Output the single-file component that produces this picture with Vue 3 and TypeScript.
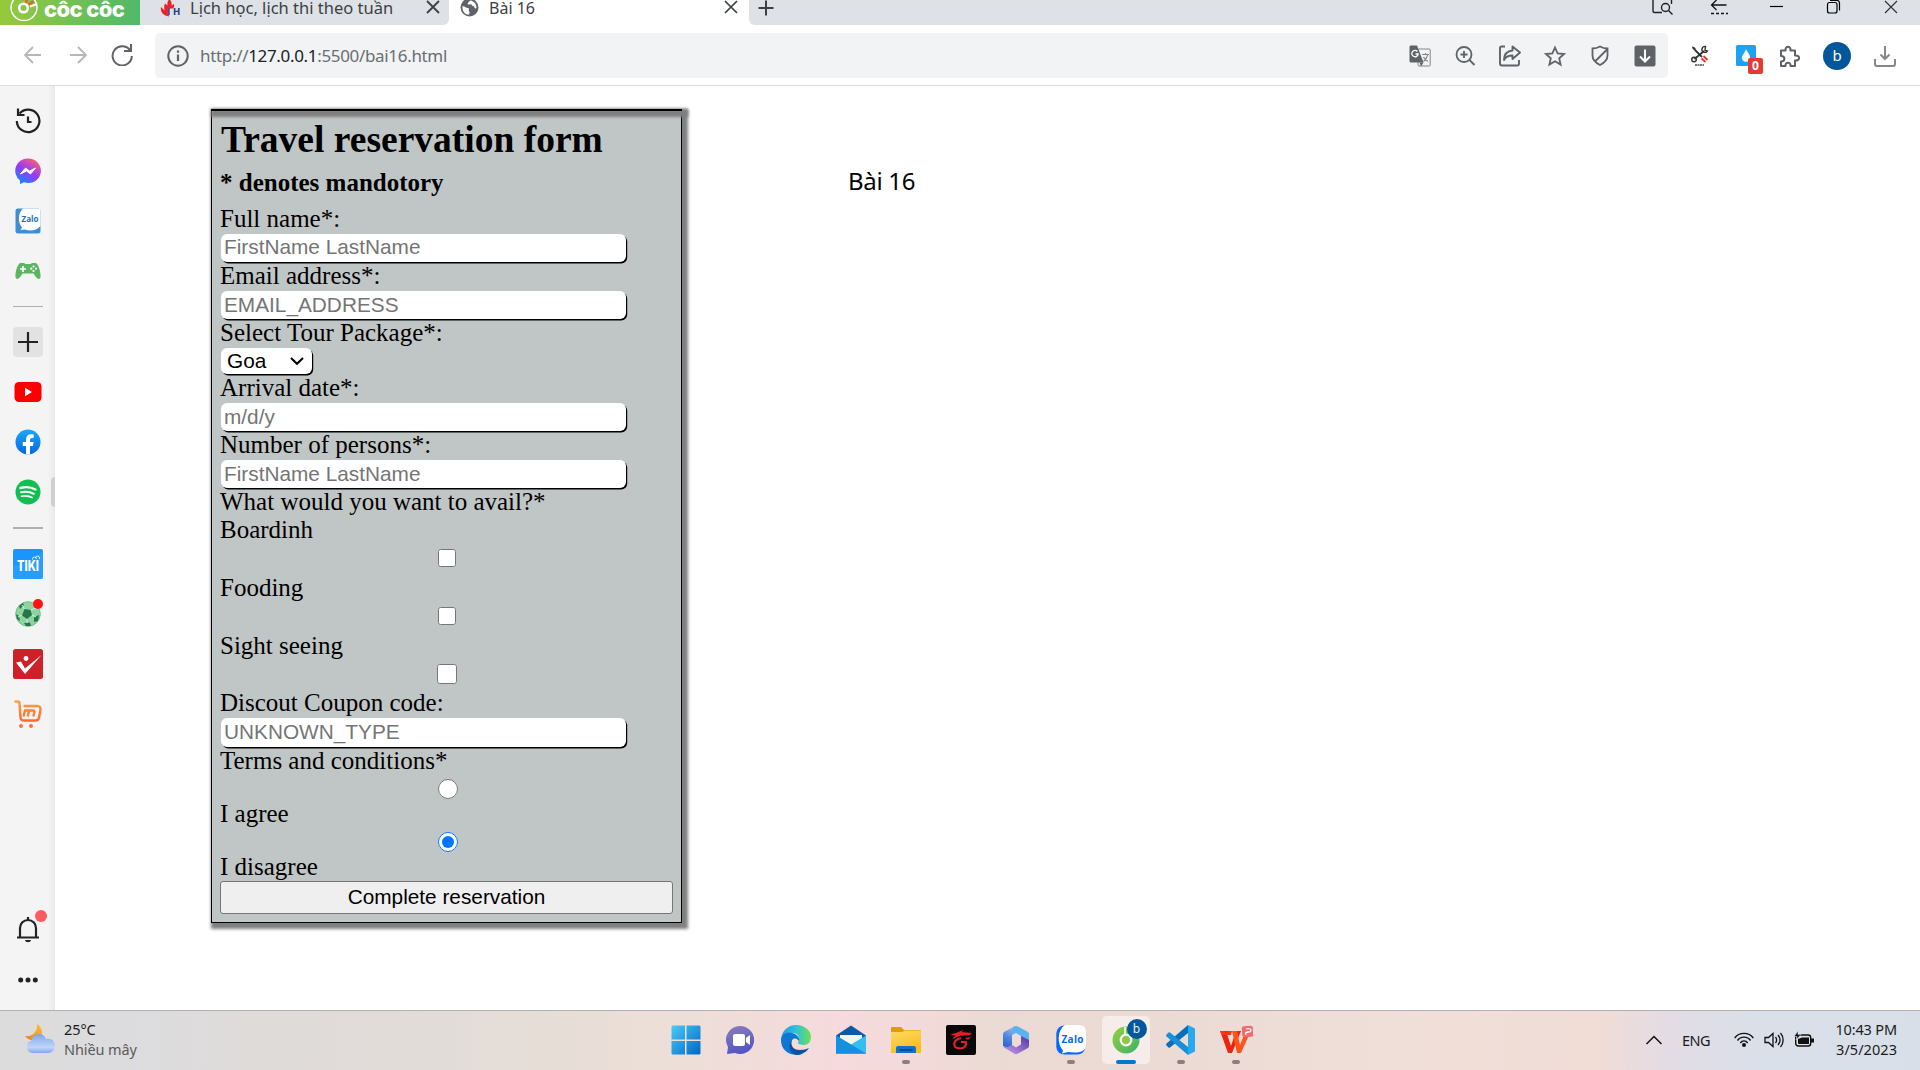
<script setup lang="ts">
interface Field {
  label: string
  placeholder: string
}

const contactFields: Field[] = [
  { label: 'Full name*:', placeholder: 'FirstName LastName' },
  { label: 'Email address*:', placeholder: 'EMAIL_ADDRESS' },
]
const tripFields: Field[] = [
  { label: 'Arrival date*:', placeholder: 'm/d/y' },
  { label: 'Number of persons*:', placeholder: 'FirstName LastName' },
]
const services: string[] = ['Boardinh', 'Fooding', 'Sight seeing']
</script>

<template>
  <div class="screen">
    <!-- Tab strip -->
    <header class="tabs">
      <div class="brand">
        <svg width="30" height="25" viewBox="0 0 30 25" fill="none">
          <circle cx="14" cy="7.500" r="13" stroke="#fff" stroke-width="1.400" />
          <circle cx="13.500" cy="8" r="4.300" stroke="#fff" stroke-width="2.600" />
          <path d="M16 3l1-4M18.500 4.500l5-3" stroke="#f0592b" stroke-width="2.200" />
          <path d="M20 6.500l6-2" stroke="#fff" stroke-width="2" />
        </svg>
        <span>cốc cốc</span>
      </div>
      <div class="tab tab-idle">
        <svg class="fav" width="20" height="20" viewBox="0 0 20 20">
          <path d="M9 18.500C3 18 0 13 1 9l3.500 3.500C4 9 4 7.500 5 5.500l2.500 2C7 4.500 8 2.500 9.500 1c1.800 2 2.500 4 2 6.500L14 6c.5 2 0 3.500-.8 4.500H8.500v4z" fill="#ec2227" />
          <text x="7.500" y="17" font-family="Inter, sans-serif" font-weight="800" font-size="9" fill="#2f3f91" textLength="12.500">IH</text>
        </svg>
        <span class="tab-title t1">Lịch học, lịch thi theo tuần</span>
        <svg class="close" width="14" height="14" viewBox="0 0 14 14"><path d="M1 1l12 12M13 1L1 13" stroke="#3c4043" stroke-width="1.800" /></svg>
      </div>
      <div class="tab tab-active">
        <svg class="fav" width="19" height="19" viewBox="0 0 19 19">
          <circle cx="9.500" cy="9.500" r="9" fill="#5f6368" />
          <path d="M2.500 8c3 .5 3 2 6 2 1 1.500-.5 2.500 1 4 .5 1-.5 1.800-1 2.800C5 16.500 2 13.500 2.500 8zM10 2.500c-1 2-3 2-2 4 2 .5 2-1 3.500 0 .5 2 3 1 3 3 .2 1.500 1.500 1 2 .5.3-3.500-2-7-6.500-7.500z" fill="#fff" />
        </svg>
        <span class="tab-title t2">Bài 16</span>
        <svg class="close" width="14" height="14" viewBox="0 0 14 14"><path d="M1 1l12 12M13 1L1 13" stroke="#3c4043" stroke-width="1.700" /></svg>
      </div>
      <div class="strip">
        <svg class="newtab" width="16" height="16" viewBox="0 0 16 16"><path d="M8 .5v15M.5 8h15" stroke="#3c4043" stroke-width="2" /></svg>
        <div class="win">
          <svg width="57" height="25" viewBox="0 0 57 25" fill="none" stroke="#222" stroke-width="1.400">
            <path d="M19 0v11q0 1.500 1.500 1.500H28M37.500 0v4" /><circle cx="31.500" cy="7.500" r="4" /><path d="M34.500 10.500l4 4" />
          </svg>
          <svg width="57" height="25" viewBox="0 0 57 25" fill="none" stroke="#111" stroke-width="1.300">
            <path d="M35.500 5H20.500M25.500 0l-5 5 5 5" /><path d="M20 13.500h17" stroke-dasharray="3 2" />
          </svg>
          <svg width="57" height="25" viewBox="0 0 57 25"><path d="M22 6.500h13" stroke="#000" stroke-width="1.200" /></svg>
          <svg width="57" height="25" viewBox="0 0 57 25" fill="none" stroke="#000" stroke-width="1.200">
            <rect x="22.500" y="2.500" width="9.500" height="10.500" rx="2" /><path d="M25 .5h7q2.500 0 2.500 2.500v7.500" />
          </svg>
          <svg width="57" height="25" viewBox="0 0 57 25"><path d="M23 1l12 12M35 1L23 13" stroke="#333" stroke-width="1.200" /></svg>
        </div>
      </div>
    </header>

    <!-- Address bar -->
    <nav class="toolbar">
      <div class="nav">
        <svg width="20" height="20" viewBox="0 0 20 20" fill="none" stroke="#b4b6b8" stroke-width="1.800"><path d="M18 10H2.500M10 2l-8 8 8 8" /></svg>
        <svg width="20" height="20" viewBox="0 0 20 20" fill="none" stroke="#b4b6b8" stroke-width="1.800"><path d="M2 10h15.500M10 2l8 8-8 8" /></svg>
        <svg width="22" height="22" viewBox="0 0 22 22" fill="none" stroke="#5f6368" stroke-width="2"><path d="M19.500 7A9.600 9.600 0 1 0 20.800 12" /><path d="M20 0v7h-7" /></svg>
      </div>
      <div class="url">
        <svg width="22" height="22" viewBox="0 0 22 22" fill="none" stroke="#5f6368" stroke-width="2"><circle cx="11" cy="11" r="9.700" /><path d="M11 9.500V16M11 5.500v2.300" stroke-width="2.200" /></svg>
        <span class="address">http://<b>127.0.0.1</b>:5500/bai16.html</span>
        <div class="url-icons">
          <svg width="22" height="22" viewBox="0 0 22 22">
            <rect x="9" y="4" width="12.200" height="17" rx="1" fill="#f1f3f4" stroke="#85888b" />
            <path d="M1.500.5H8l6.500 17H2q-1.500 0-1.500-1.500V2Q.5.5 1.500.5z" fill="#5f6368" /><path d="M10.500 17.500h4l-2.500 4z" fill="#5f6368" />
            <path d="M8.500 6.500a3.200 3.200 0 1 0 .7 2.500H6.500" fill="none" stroke="#fff" stroke-width="1.300" />
            <path d="M13 9.500h7M16.500 8v1.500M18.500 10c-.5 3-2 5-4 6.500M14.500 12c1 2 2.500 3.500 4.500 4.500" fill="none" stroke="#85888b" stroke-width="1.200" />
          </svg>
          <svg width="22" height="22" viewBox="0 0 22 22" fill="none" stroke="#5f6368" stroke-width="1.800"><circle cx="10" cy="9.500" r="7.500" /><path d="M15.500 15l5 5M10 6v7M6.500 9.500h7" /></svg>
          <svg width="22" height="22" viewBox="0 0 22 22" fill="none" stroke="#5f6368" stroke-width="1.900" stroke-linejoin="round"><path d="M6 1.500H2.500q-1.500 0-1.500 1.500v15.500Q1 20.500 3 20.500h15.500q1.500 0 1.500-1.500V15" /><path d="M13.500 1.500l7.500 6-7.500 6.500V10.500C9 10.500 6.500 12 5 15c.2-6 3-9 8.500-9.500z" /></svg>
          <svg width="22" height="22" viewBox="0 0 22 22" fill="none" stroke="#5f6368" stroke-width="1.800"><path d="M11 2.500l2.600 5.900 6.400.6-4.800 4.300 1.400 6.300L11 16.300l-5.600 3.300 1.400-6.300L2 9l6.400-.6z" /></svg>
          <svg width="22" height="22" viewBox="0 0 22 22" fill="none" stroke="#5f6368" stroke-width="1.800"><path d="M11 1.500c2.500 1.500 5 2 7.500 2v7c0 4.500-3.500 7.500-7.500 9.500-4-2-7.500-5-7.500-9.500v-7c2.500 0 5-.5 7.500-2zM18 4.500L6 16.500" /></svg>
          <svg width="22" height="22" viewBox="0 0 22 22"><rect x=".5" y=".5" width="21" height="21" rx="2" fill="#5f6368" /><path d="M11 4.500v12M6 11.500l5 5 5-5" fill="none" stroke="#fff" stroke-width="2" /></svg>
        </div>
      </div>
      <div class="extensions">
        <svg width="20" height="22" viewBox="0 0 20 22" fill="none">
          <path d="M4.500 14L14 6M5 5l7 7" stroke="#333" stroke-width="1.800" /><path d="M2 1.500c2 0 4 1.500 4 4-2 0-4-1.500-4-4z" fill="#333" />
          <path d="M15.500 1.500a3 3 0 1 0 2 4.500l-2.500-.5z" stroke="#333" stroke-width="1.400" /><circle cx="4" cy="14.500" r="2.300" stroke="#333" stroke-width="1.400" />
          <path d="M11.500 13.500l4 3.500M13.500 11l4 4" stroke="#e33" stroke-width="1.800" /><path d="M5 20h9" stroke="#777" stroke-width="2" stroke-dasharray="2 .5" />
        </svg>
        <div class="drop">
          <svg width="20" height="21" viewBox="0 0 20 21"><rect width="20" height="21" rx="1.500" fill="#1da1f2" /><path d="M10 4c1 3 4 5 4 8.500a4 4.200 0 0 1-8 0C6 9.500 9 8 10 4z" fill="#fff" /></svg>
          <span>0</span>
        </div>
        <svg width="22" height="22" viewBox="0 0 22 22" fill="none" stroke="#5f6368" stroke-width="2" stroke-linejoin="round"><path d="M2 5.500h4.500c-.6-5 5.600-5 5 0H16v5c5.500-.5 5.500 5.500 0 5V21h-4.500c.5-4.500-5.500-4.500-5 0H2v-4.500c4.500 0 4.500-5.500 0-5.500z" /></svg>
        <span class="avatar">b</span>
        <svg width="22" height="22" viewBox="0 0 22 22" fill="none" stroke="#85888b" stroke-width="2"><path d="M1 14v5q0 2 2 2h16q2 0 2-2v-5M11 1v13M6.500 9.500L11 14l4.500-4.500" /></svg>
      </div>
    </nav>

    <main class="body">
      <!-- Side panel -->
      <aside class="side">
        <div class="item"><svg width="26" height="26" viewBox="0 0 26 26" fill="none" stroke="#222" stroke-width="2.200"><path d="M4.500 5.500A11.300 11.300 0 1 1 1.800 13" /><path d="M3 .5V7h6.500M13 8.500V14h3.500" /></svg></div>
        <div class="item">
          <svg width="26" height="26" viewBox="0 0 26 26">
            <defs><linearGradient id="msg" x1=".2" y1="1" x2=".8" y2="0"><stop offset="0" stop-color="#0a8dff" /><stop offset=".5" stop-color="#9b39f5" /><stop offset="1" stop-color="#ff6470" /></linearGradient></defs>
            <path d="M13 .5a12.500 12.300 0 1 1-4 23.800L5 26v-3.500A12.300 12.300 0 0 1 13 .5z" fill="url(#msg)" /><path d="M5.500 16l5-6 4 3 6-3-5 6-4-3z" fill="#fff" stroke="#fff" stroke-width="1" />
          </svg>
        </div>
        <div class="item">
          <svg width="26" height="26" viewBox="0 0 26 26">
            <rect x=".5" y=".5" width="25" height="25" rx="2.500" fill="#3b8fd9" /><path d="M8 .5h15.500q2 0 2 2V18c-4 5-11 5.500-15.500 3.500L5.500 22l1.500-2.500C2.500 14 3 5 8 .5z" fill="#fff" />
            <text x="6.500" y="14" font-family="Open Sans, sans-serif" font-weight="700" font-size="8" fill="#1672c4" textLength="17">Zalo</text>
          </svg>
        </div>
        <div class="item">
          <svg width="26" height="18" viewBox="0 0 26 18">
            <path d="M5 1h4l1.500 1h5L17 1h4c3 2 5 10 4.500 14-1 3.500-4 2-7-3.500h-11C4.500 17 1.500 18.500.5 15 0 11 2 3 5 1z" fill="#5cb562" />
            <path d="M8 4v6M5 7h6" stroke="#fff" stroke-width="1.700" /><circle cx="18.500" cy="4.500" r="1.100" fill="#fff" /><circle cx="18.500" cy="9" r="1.100" fill="#fff" /><circle cx="16.300" cy="6.700" r="1.100" fill="#fff" /><circle cx="21" cy="6.700" r="1.100" fill="#fff" />
          </svg>
        </div>
        <div class="rule"></div>
        <div class="item"><div class="add"><svg width="20" height="20" viewBox="0 0 20 20"><path d="M10 0v20M0 10h20" stroke="#222" stroke-width="2.200" /></svg></div></div>
        <div class="item"><svg width="28" height="20" viewBox="0 0 28 20"><rect x=".5" width="27" height="20" rx="4.500" fill="#f00" /><path d="M11 5.800v8.400l7-4.200z" fill="#fff" /></svg></div>
        <div class="item"><svg width="26" height="26" viewBox="0 0 26 26"><defs><linearGradient id="fb" x2="0" y2="1"><stop stop-color="#1aa9fb" /><stop offset="1" stop-color="#0765e2" /></linearGradient></defs><circle cx="13" cy="13" r="12.500" fill="url(#fb)" /><path d="M11 25.500V17H7.800v-4H11v-2.500C11 7 13 5.300 16 5.300l2.700.3V9H17c-1.500 0-2 .8-2 1.900V13h3.600l-.7 4H15v8.500z" fill="#fff" /></svg></div>
        <div class="item"><svg width="26" height="26" viewBox="0 0 26 26" fill="none" stroke="#fff" stroke-linecap="round"><circle cx="13" cy="13" r="12.500" fill="#11bf50" stroke="none" /><path d="M5.500 9c5-1.500 10.500-1 15 1.500" stroke-width="2.400" /><path d="M6 13.300c4.500-1.200 9-.7 12.800 1.500" stroke-width="2" /><path d="M6.500 17.300c4-1 7.500-.5 10.500 1.300" stroke-width="1.700" /></svg></div>
        <div class="rule thick"></div>
        <div class="item"><svg width="30" height="30" viewBox="0 0 30 30"><rect width="30" height="30" rx="2" fill="#1a94ff" /><path d="M0 16c10 0 20-4 30-14v26q0 2-2 2H2q-2 0-2-2z" fill="#35a4ff" opacity=".55" /><path d="M19.500 10.500V10a2 2 0 0 1 4 0M22.500 9a2 2 0 0 1 4 0v1" fill="none" stroke="#fff" stroke-width="1" opacity=".8" /><text x="4" y="21.500" font-family="Inter, sans-serif" font-weight="800" font-size="14" fill="#fff" textLength="22" lengthAdjust="spacingAndGlyphs">TIKI</text></svg></div>
        <div class="item">
          <svg width="26" height="26" viewBox="0 0 26 26"><circle cx="13" cy="13" r="12.300" fill="#8ed3a1" stroke="#6cc387" /><g fill="#267747"><path d="M9.500 8l6 1 1.500 5-5 4-5-3.500z" /><path d="M4 5l4-3 1 2-4 4zM1 13l3 2 1 5-3-2zM19 16l5-2-1 6-4 1zM9 22l6-.5 1 3.500H11z" /></g><path d="M16 9l5-2M17 14l4 2M12 18v4M7 14l-4 2M9.500 8L7 4" stroke="#d6f0dc" /></svg>
          <i class="dot ball"></i>
        </div>
        <div class="item"><svg width="30" height="30" viewBox="0 0 30 30"><rect width="30" height="30" rx="2.500" fill="#cd2028" /><path d="M3 13.500l5-1 4 7L28.500 6 12 25z" fill="#fff" /><circle cx="13" cy="9.500" r="2.400" fill="#fff" /></svg></div>
        <div class="item"><svg width="28" height="28" viewBox="0 0 28 28" fill="none"><defs><linearGradient id="cart" x2="0" y2="1"><stop stop-color="#ff9f43" /><stop offset="1" stop-color="#ff6a30" /></linearGradient></defs><path d="M.5 1.500h3q2 0 2 2l1 14q.3 3 3 3h12q3 0 3.500-3L26.500 10q.4-4-3-4H9.500" stroke="url(#cart)" stroke-width="2.500" /><path d="M9.500 16.500l1.500-6h8q1.800 0 1.400 1.700l-1 4.300M15 10.500l-1.200 6" stroke="#ff8138" stroke-width="2.400" /><circle cx="7" cy="26" r="2" fill="#ff6f3b" /><circle cx="17" cy="26" r="2" fill="#ff6f3b" /></svg></div>
        <div class="grow"></div>
        <div class="item">
          <svg width="24" height="26" viewBox="0 0 24 26"><path d="M1 20.500h22M4 20V11a8 8 0 0 1 16 0v9M12 3V0" fill="none" stroke="#222" stroke-width="2.200" /><path d="M9 23h6c-.5 3-5.500 3-6 0z" fill="#222" /></svg>
          <i class="dot bell"></i>
        </div>
        <div class="item"><svg width="20" height="6" viewBox="0 0 20 6" fill="#222"><circle cx="2.700" cy="3" r="2.500" /><circle cx="10" cy="3" r="2.500" /><circle cx="17.300" cy="3" r="2.500" /></svg></div>
        <div class="handle"></div>
      </aside>

      <!-- Web page -->
      <form class="form" @submit.prevent>
        <div class="lid"></div>
        <h1>Travel reservation form</h1>
        <h2>* denotes mandotory</h2>
        <template v-for="f in contactFields" :key="f.label">
          <label>{{ f.label }}</label>
          <input class="text" type="text" :placeholder="f.placeholder" />
        </template>
        <label>Select Tour Package*:</label>
        <div class="select">
          <span>Goa</span>
          <svg width="14" height="9" viewBox="0 0 14 9"><path d="M1 1l6 5.800L13 1" fill="none" stroke="#000" stroke-width="2" /></svg>
        </div>
        <template v-for="f in tripFields" :key="f.label">
          <label>{{ f.label }}</label>
          <input class="text" type="text" :placeholder="f.placeholder" />
        </template>
        <label>What would you want to avail?*</label>
        <template v-for="(s, i) in services" :key="s">
          <label>{{ s }}</label>
          <div class="check" :class="{ last: i === services.length - 1 }"><input type="checkbox" /></div>
        </template>
        <label>Discout Coupon code:</label>
        <input class="text tall" type="text" placeholder="UNKNOWN_TYPE" />
        <label>Terms and conditions*</label>
        <div class="radio"><input type="radio" name="terms" /></div>
        <label>I agree</label>
        <div class="radio"><input type="radio" name="terms" checked /></div>
        <label>I disagree</label>
        <button type="button">Complete reservation</button>
      </form>
      <p class="caption">Bài 16</p>
    </main>

    <!-- Taskbar -->
    <footer class="taskbar">
      <div class="weather">
        <svg width="30" height="30" viewBox="0 0 30 30">
          <defs><linearGradient id="cl" x2="0" y2="1"><stop stop-color="#7aa5ea" /><stop offset=".7" stop-color="#c3d6f8" /><stop offset="1" stop-color="#7fa6ee" /></linearGradient><linearGradient id="mn" x1="1" x2="0" y2="1"><stop stop-color="#fbc531" /><stop offset="1" stop-color="#ee7d1c" /></linearGradient></defs>
          <path d="M12 0c7 4 7 14-1 16-5 1-9-1-11-4C7 13 13 8 12 0z" fill="url(#mn)" />
          <path d="M7 29a6.500 6.500 0 0 1-.5-12.500C8 8 19 8 21 15c5-1.500 9 2 9 6.500S27 29 23 29z" fill="url(#cl)" />
        </svg>
        <div class="wtext"><span>25°C</span><span class="cond">Nhiều mây</span></div>
      </div>
      <div class="apps">
        <div class="app"><svg width="30" height="30" viewBox="0 0 30 30"><defs><linearGradient id="win" x2="1" y2="1"><stop stop-color="#4cc9fa" /><stop offset="1" stop-color="#0067c4" /></linearGradient></defs><path d="M1.500.5H14v14H.5v-13zM15.500.5h13l1 1v13h-14zM.5 16H14v13.500H1.500l-1-1zM15.500 16h14v12.500l-1 1h-13z" fill="url(#win)" /></svg></div>
        <div class="app"><svg width="30" height="30" viewBox="0 0 30 30"><defs><linearGradient id="ch" x1=".2" x2=".5" y2="1"><stop stop-color="#8b7ab8" /><stop offset="1" stop-color="#5056c8" /></linearGradient></defs><path d="M15 1a14 14 0 1 1-6 27L1 29l1-7A14 14 0 0 1 15 1z" fill="url(#ch)" /><rect x="7" y="9" width="12" height="12" rx="2" fill="#fff" /><path d="M20 13l4-3v10l-4-3z" fill="#fff" /></svg></div>
        <div class="app"><svg width="32" height="32" viewBox="0 0 32 32"><defs><linearGradient id="e1" x2="1"><stop stop-color="#2396e5" /><stop offset=".5" stop-color="#2fc1db" /><stop offset="1" stop-color="#6be34c" /></linearGradient></defs><path d="M1 17C1 7 8 1 16 1c9 0 15 6 15 12 0 5-3 8-7 8-3 0-6-1-6-2 0-1 1-1 1-4 0-4-3-6-6-6-6 0-10 3-12 8z" fill="url(#e1)" /><path d="M1 16C2 9 8 8 12 9c5 1 8 5 7 8l-1-1c-3-3-7-1-7 4 0 6 6 11 12 10C12 33 1 28 1 16z" fill="#0c78d2" /><path d="M12 16c-2 5 1 10 8 10 4 0 6-1 9-2-4 6-10 7-13 7-6-2-9-10-4-15z" fill="#0e4f9f" /></svg></div>
        <div class="app"><svg width="32" height="30" viewBox="0 0 32 30"><path d="M16 .5l15 10v18H1v-18z" fill="#0c59a4" /><path d="M5 10h22v10H5z" fill="#f3f3f3" /><path d="M1 10.500l15 9 15-9v17q0 1-1 1H2q-1 0-1-1z" fill="#35bdf0" /><path d="M1 10.500l30 18H2q-1 0-1-1z" fill="#1490df" /></svg></div>
        <div class="app"><svg width="32" height="28" viewBox="0 0 32 28"><defs><linearGradient id="fo" x2=".4" y2="1"><stop stop-color="#ffd968" /><stop offset="1" stop-color="#f9bd1c" /></linearGradient></defs><path d="M1 6V2q0-1 1-1h9l3 3h16q1 0 1 1v5H1z" fill="#dd9c09" /><path d="M1 6h11l3-1.500h16V26q0 1-1 1H1z" fill="url(#fo)" /><path d="M6 27v-5q0-2 2-2h16q2 0 2 2v5z" fill="#1172cd" /><path d="M9.500 24h13" stroke="#073f7c" stroke-width="1.400" /></svg><i class="run"></i></div>
        <div class="app"><svg width="30" height="30" viewBox="0 0 30 30"><rect width="30" height="30" rx="2" fill="#080808" /><path d="M10 8l7-3-1.500 2L26 8c-1 1.500-3 2.500-5 2.500-7 0-10 .5-14 4 0-2 1-3 2.500-4L4.500 10C6 8.500 8 8.500 10 8z" fill="#df202d" /><path d="M15 13c-5 1-7.500 4-6.500 7.500 1 3.500 8 4 10.500 1 1.200-1.500 1.200-3 .8-4.500h-5" fill="none" stroke="#df202d" stroke-width="2.200" /><path d="M19 13l6-1-3 3z" fill="#df202d" /></svg></div>
        <div class="app"><svg width="28" height="30" viewBox="0 0 28 30">
          <defs><linearGradient id="m1" x1=".5" x2=".2" y2="1"><stop stop-color="#a7b0f2" /><stop offset=".5" stop-color="#4d86dc" /><stop offset="1" stop-color="#2f5fc6" /></linearGradient><linearGradient id="m2" x1="1" x2="0" y2="1"><stop stop-color="#4a37a2" /><stop offset="1" stop-color="#d09cf0" /></linearGradient></defs>
          <path d="M14 1L10 5v15l-4 3-5-2V9q0-1 1-2L12 1.500z" fill="url(#m1)" />
          <path d="M12 1.500q2-1 4 0L26 7q1 1 1 2v8l-8-6-5-3-4 2V5q0-2 2-3.500z" fill="#58b4ee" />
          <path d="M27 15v6q0 1-1 2l-10 5.500q-2 1-4 0L1 22l5 0 4-2 4 2.500 5-3V11l6 3z" fill="url(#m2)" />
          <path d="M10 11.500l4-3 5 3v7l-5 3-4-3z" fill="#ecdbd6" />
        </svg></div>
        <div class="app"><svg width="30" height="30" viewBox="0 0 30 30"><rect x=".3" y=".5" width="29" height="29" rx="8" fill="#0868f7" /><path d="M9 0h14q7 0 7 7v14c-1 7-10 7-18 6l-6 1.500 1-3C1 19 1 5 9 0z" fill="#fff" /><text x="5.500" y="17.500" font-family="Open Sans, sans-serif" font-weight="700" font-size="10" fill="#0868f7" textLength="22">Zalo</text></svg><i class="run"></i></div>
        <div class="app current"><div class="tile"><svg width="28" height="28" viewBox="0 0 28 28"><defs><linearGradient id="cc" x2="1" y2="1"><stop stop-color="#97cf3e" /><stop offset="1" stop-color="#39b36b" /></linearGradient></defs><circle cx="14" cy="14" r="13.500" fill="url(#cc)" /><circle cx="14" cy="14" r="5.300" fill="#8bca45" stroke="#fff" stroke-width="2.200" /><path d="M13 9V1" stroke="#fff" stroke-width="1.600" /></svg><span class="badge">b</span></div><i class="run wide"></i></div>
        <div class="app"><svg width="30" height="30" viewBox="0 0 30 30"><path d="M22 0l7 3.500v23L22 30z" fill="#28a8ef" /><path d="M22 0v8L4 22.500q-.8.500-1.500 0L.5 20.500q-.8-1 0-2z" fill="#0870b8" /><path d="M22 30v-8L4 7.500q-.8-.5-1.500 0L.5 9.500q-.8 1 0 2z" fill="#1690d8" /></svg><i class="run"></i></div>
        <div class="app"><svg width="34" height="32" viewBox="0 0 34 32"><path d="M1 7h6l5 15 5-15h5l-9 22H9z" fill="#e8270f" /><path d="M13 7h5l3 14 4-10h5l-8 18h-4z" fill="#ff5319" /><path d="M1 7h12l-1 4H3z" fill="#ff2f18" /><rect x="23" y="2" width="11" height="11" rx="2" transform="rotate(-4 28 7)" fill="#f06b70" /><path d="M27 11c-1-2 0-3 2-3s3-1 3-2-2-2-5-1" stroke="#fff" stroke-width="1.300" fill="none" /></svg><i class="run"></i></div>
      </div>
      <div class="tray">
        <svg class="chev" width="16" height="10" viewBox="0 0 16 10"><path d="M.5 9L8 1.500 15.500 9" fill="none" stroke="#111" stroke-width="1.500" /></svg>
        <span class="lang">ENG</span>
        <svg class="wifi" width="20" height="16" viewBox="0 0 20 16" fill="none" stroke="#111" stroke-width="1.400"><path d="M.7 6C5-.2 15-.2 19.300 6M3.500 8.500c3-4.500 10-4.500 13 0M6.300 11c2-2.800 5.400-2.800 7.400 0" /><circle cx="10" cy="13" r="2" fill="#111" stroke="none" /></svg>
        <svg class="vol" width="20" height="18" viewBox="0 0 20 18" fill="none" stroke="#111" stroke-width="1.300"><path d="M1 6.500h3.500L9 2.500v13L4.500 11.500H1zM11.500 6c1.500 2 1.500 4 0 6M14 4c2.500 3 2.500 7 0 10M16.500 2c3.500 4 3.500 10 0 14" /></svg>
        <svg class="bat" width="20" height="18" viewBox="0 0 20 18"><rect x="1.700" y="4" width="15" height="11" rx="2.500" fill="none" stroke="#111" stroke-width="1.400" /><path d="M4 12.500V8l4-1.500h7V13H5z" fill="#111" /><path d="M17 7.500h3v4h-3z" fill="#111" /><path d="M4 0L0 5.500h3L2 9l5-5.500H4z" fill="#111" stroke="#dbe0e9" stroke-width=".6" /></svg>
        <div class="clock"><span>10:43 PM</span><span class="date">3/5/2023</span></div>
      </div>
    </footer>
  </div>
</template>

<style>
body { margin: 0; overflow: hidden; }
</style>

<style scoped>
* { box-sizing: border-box; }
svg { display: block; flex: none; }
.screen { width: 1920px; height: 1070px; display: flex; flex-direction: column; background: #fff; overflow: hidden; font-family: "Noto Sans", "Open Sans", sans-serif; }

.tabs { height: 25px; flex: none; display: flex; background: linear-gradient(90deg, #dee1e6 300px, #fff 300px, #fff 900px, #dee1e6 900px); overflow: hidden; }
.brand { width: 140px; display: flex; padding-left: 10px; background: linear-gradient(90deg, #97c93d, #4fb96a); color: #fff; }
.brand span { font: 800 22px/24px Inter, sans-serif; margin: -3px 0 0 4px; letter-spacing: -0.6px; white-space: nowrap; }
.tab { display: flex; align-items: flex-start; }
.tab-idle { width: 309px; background: #dee1e6; border-radius: 0 0 6px 0; padding-left: 20px; }
.tab-active { width: 300px; background: #fff; padding-left: 11px; }
.fav { margin-top: -2px; }
.tab-title { color: #3c4043; font-size: 16px; line-height: 24px; margin-top: -4px; white-space: nowrap; }
.t1 { margin-left: 10px; width: 236px; font-size: 16.5px; }
.t2 { margin-left: 10px; width: 235px; }
.strip { flex: 1; background: #dee1e6; border-radius: 0 0 0 6px; display: flex; justify-content: space-between; padding: 0 1px 0 9px; }
.newtab { margin-top: 0; }
.win { display: flex; }

.toolbar { height: 61px; flex: none; display: flex; border-bottom: 1px solid #dadce0; padding-top: 8px; }
.nav { width: 155px; height: 44px; flex: none; display: flex; align-items: center; padding-left: 23px; }
.nav svg { margin-right: 25px; }
.nav svg:nth-child(2) { margin-right: 23px; }
.url { width: 1513px; height: 45px; flex: none; border-radius: 5px; background: #f1f3f4; display: flex; align-items: center; padding: 0 12px; }
.address { margin-left: 11px; font-size: 17px; line-height: 24px; color: #6a6e73; white-space: nowrap; letter-spacing: -0.33px; }
.address b { font-weight: 400; color: #202124; }
.url-icons { margin-left: auto; display: flex; gap: 23px; }
.extensions { flex: 1; height: 45px; display: flex; align-items: center; padding-left: 22px; }
.drop { position: relative; margin: 0 23px 0 26px; }
.drop span { position: absolute; left: 12px; top: 13px; width: 15px; height: 16px; border-radius: 2px; background: #e53935; color: #fff; font: 700 12px/16px "Open Sans", sans-serif; text-align: center; }
.avatar { width: 28px; height: 28px; border-radius: 50%; background: #01579b; color: #fff; font-size: 15px; line-height: 27px; text-align: center; margin: 0 23px 0 22px; }

.body { flex: 1; min-height: 0; display: flex; align-items: flex-start; }
.side { position: relative; width: 55px; height: 924px; flex: none; padding: 10px 0 5px; display: flex; flex-direction: column; background: linear-gradient(90deg, #f4f4f4 48px, #e9e9e9 55px); }
.item { position: relative; height: 50px; flex: none; display: flex; align-items: center; justify-content: center; }
.rule { height: 21px; flex: none; padding: 10px 12px 0 13px; }
.rule::after { content: ""; display: block; height: 1px; background: #b0b0b0; }
.rule.thick { height: 22px; }
.rule.thick::after { height: 2px; }
.add { width: 30px; height: 30px; border-radius: 4px; background: #e2e2e2; display: flex; align-items: center; justify-content: center; }
.grow { flex: 1; }
.dot { position: absolute; border-radius: 50%; }
.dot.ball { left: 33px; top: 10px; width: 10px; height: 10px; background: #ff1212; }
.dot.bell { left: 35px; top: 5px; width: 12px; height: 12px; background: #ff5b60; }
.handle { position: absolute; left: 51px; top: 391px; width: 4px; height: 30px; border-radius: 4px 0 0 4px; background: #cfcfcf; }

.form { position: relative; width: 471px; height: 814px; flex: none; margin: 23px 0 0 156px; border: 1px solid #000; background: #c0c6c5; box-shadow: 3px 3px 3px 3px gray; padding: 0 9px 0 8px; display: flex; flex-direction: column; font-family: "Liberation Serif", serif; color: #000; }
.lid { position: absolute; left: -1px; top: -1px; width: 471px; height: 2px; background: #000; box-shadow: 3px 3px 3px 3px gray; }
h1 { position: relative; margin: 8px 0 0 1px; font-size: 37.5px; line-height: 43px; white-space: nowrap; }
h2 { margin: 8px 0 0; font-size: 25px; line-height: 28px; height: 36px; }
label { display: block; height: 28px; line-height: 28px; font-size: 25px; white-space: nowrap; }
input.text { width: 405px; height: 28px; margin: 1px 0 0 1px; padding: 0 3px; border: 0; border-radius: 6px; background: #fff; box-shadow: 1.2px 1.6px 0 #000; font: 20.8px/26px "Liberation Sans", sans-serif; outline: none; flex: none; }
h2 + label + input.text { padding-bottom: 2px; }
input.text.tall { height: 29px; padding-bottom: 2px; }
input.text::placeholder { color: #757575; opacity: 1; }
.select { width: 91px; height: 26px; margin: 1px 0 0 1px; border-radius: 6px; background: #fff; box-shadow: 1.2px 1.6px 0 #000; display: flex; align-items: center; justify-content: space-between; padding: 0 8px 0 6px; font: 20.8px/26px "Liberation Sans", sans-serif; }
.check { height: 30px; padding: 5px 0 0 218px; }
.check input { display: block; width: 18px; height: 18px; margin: 0; }
.check.last { height: 29px; padding: 4px 0 0 217px; }
.check.last input { width: 20px; height: 20px; }
.radio { height: 25px; padding: 4px 0 0 218px; }
.radio input { display: block; width: 20px; height: 20px; margin: 0; }
button { width: 453px; height: 33px; flex: none; border: 1px solid #767676; border-radius: 3px; background: #efefef; padding: 0 0 2px; font: 20.8px/29px "Liberation Sans", sans-serif; color: #000; }
.caption { margin: 78px 0 0 166px; font-size: 24px; line-height: 34px; color: #000; letter-spacing: -0.3px; }

.taskbar { height: 60px; flex: none; display: flex; border-top: 1px solid #b5b0b0; background: linear-gradient(90deg, #dcdcdc 0, #dcdcdf 120px, #dfdbd8 280px, #e2dcd8 450px, #ecdfd7 660px, #f6dadd 840px, #f4dadb 900px, #ebdad4 1000px, #ecdbd5 1160px, #f0dfd8 1400px, #f1dcd6 1600px, #e3dce5 1670px, #dae0ea 1760px, #d8dfe9 1920px); color: #1b1b1b; font-size: 14.5px; line-height: 20px; white-space: nowrap; }
.weather { width: 658px; flex: none; display: flex; padding: 13px 0 0 25px; }
.wtext { margin: -5px 0 0 9px; display: flex; flex-direction: column; letter-spacing: -0.1px; }
.cond { color: #5a5a5a; }
.apps { display: flex; }
.app { position: relative; width: 55px; height: 58px; display: flex; align-items: center; justify-content: center; }
.tile { position: relative; width: 48px; height: 48px; border-radius: 5px; background: #f6edeb; display: flex; align-items: center; justify-content: center; }
.badge { position: absolute; left: 25px; top: 3px; width: 20px; height: 20px; border-radius: 50%; background: #04579b; color: #e6eef6; font-size: 12px; line-height: 19px; text-align: center; }
.run { position: absolute; left: 24px; top: 49px; width: 8px; height: 4px; border-radius: 2px; background: #8a807e; }
.run.wide { left: 18px; width: 20px; background: #0078d4; }
.tray { margin-left: auto; height: 57px; display: flex; align-items: center; padding-right: 23px; }
.chev { margin-right: 20px; }
.lang { width: 28px; margin-right: 24px; letter-spacing: -0.5px; }
.wifi { margin-right: 10px; }
.vol { margin-right: 10px; }
.bat { margin-right: 22px; }
.clock { width: 61px; display: flex; flex-direction: column; text-align: right; align-items: flex-end; margin-top: -1px; letter-spacing: -0.15px; }
.date { letter-spacing: 0.05px; }
</style>
